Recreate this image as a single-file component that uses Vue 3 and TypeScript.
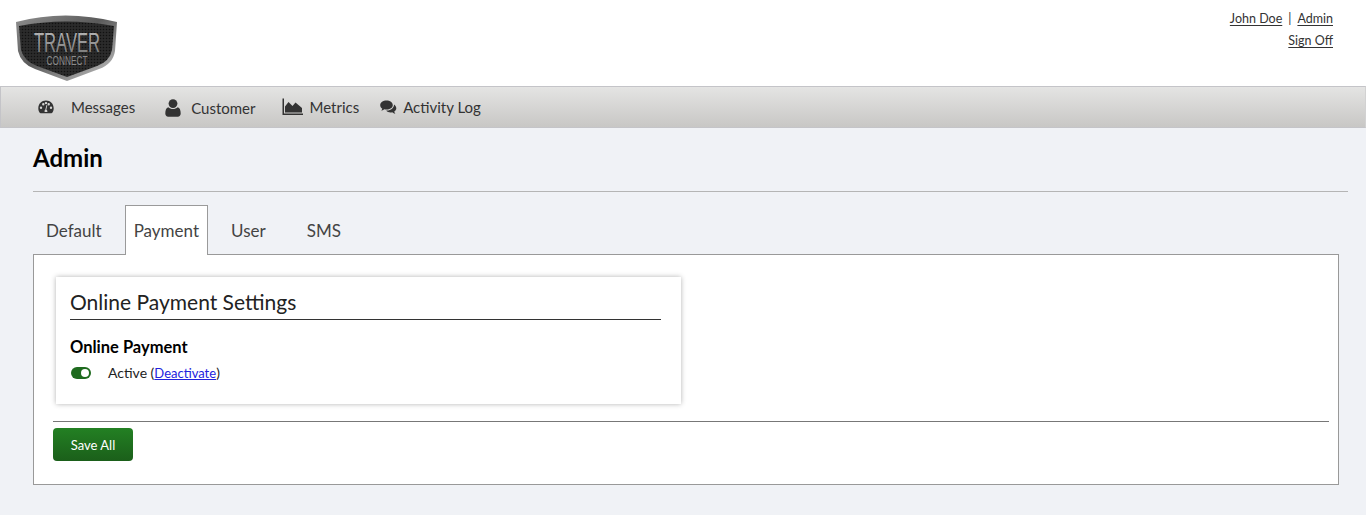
<template>
  <div class="page">
    <header class="top">
      <svg class="logo" viewBox="0 0 104 70" width="104" height="70">
        <defs>
          <linearGradient id="rim" x1="0" y1="0" x2="1" y2="1">
            <stop offset="0" stop-color="#8f8f8f" />
            <stop offset="0.45" stop-color="#5a5a5a" />
            <stop offset="1" stop-color="#c9c9c9" />
          </linearGradient>
          <linearGradient id="word" x1="0" y1="0" x2="0" y2="1">
            <stop offset="0" stop-color="#bdbdbd" />
            <stop offset="1" stop-color="#6f6f6f" />
          </linearGradient>
          <pattern id="mesh" width="3" height="3" patternUnits="userSpaceOnUse">
            <rect width="3" height="3" fill="#2b2b2b" />
            <circle cx="1.5" cy="1.5" r="0.8" fill="#111" />
          </pattern>
        </defs>
        <path d="M1 9 Q50 -4 102 9 L100 38 Q98 51 84 56 L52 68 L20 56 Q6 51 3 38 Z" fill="url(#rim)" />
        <path d="M4 13 Q50 4 99 13 L97 37 Q95 48 82 53 L52 64 L22 53 Q9 48 6 37 Z" fill="url(#mesh)" />
        <text class="logo-main" x="52" y="39" text-anchor="middle" fill="url(#word)" textLength="66" lengthAdjust="spacingAndGlyphs">TRAVER</text>
        <text class="logo-sub" x="52" y="52" text-anchor="middle" fill="#8a8a8a" textLength="41" lengthAdjust="spacingAndGlyphs">CONNECT</text>
      </svg>
      <div class="account">
        <div><a>John Doe</a><span class="sep">|</span><a>Admin</a></div>
        <div class="account-row"><a>Sign Off</a></div>
      </div>
    </header>

    <nav class="nav">
      <a class="nav-item messages">
        <svg width="16" height="14" viewBox="0 0 16 14">
          <path fill-rule="evenodd" d="M8 0.5C3.6 0.5 0.3 3.9 0.3 8.2c0 1.7.5 3.3 1.4 4.6.2.3.5.5.9.5h10.800c.4 0 .7-.2.9-.5.9-1.300 1.400-2.900 1.400-4.600C15.700 3.900 12.400.5 8 .5zM3 8.900a1.200 1.200 0 1 1 0-2.400 1.200 1.200 0 0 1 0 2.400zm2.300-3.500a1.200 1.200 0 1 1 0-2.400 1.200 1.200 0 0 1 0 2.400zM8 4.300a1.200 1.200 0 1 1 0-2.400 1.200 1.200 0 0 1 0 2.400zm1.300 7.600H6.700a1.500 1.500 0 0 1 .6-2.100L8.500 5l.8.200-1 4.500c.9.300 1.400 1.300 1 2.200zm1.400-6.500a1.200 1.200 0 1 1 0-2.400 1.200 1.200 0 0 1 0 2.400zM13 8.900a1.200 1.200 0 1 1 0-2.400 1.200 1.200 0 0 1 0 2.400z" fill="#333" />
        </svg>
        <span>Messages</span>
      </a>
      <a class="nav-item customer">
        <svg width="16" height="18" viewBox="0 0 16 18">
          <circle cx="8" cy="4.600" r="4.400" fill="#333" />
          <path d="M3.300 8.200C1.200 8.900.3 11 .3 14.600c0 2 1.200 3.100 2.900 3.100h9.600c1.700 0 2.900-1.100 2.900-3.100 0-3.600-.9-5.700-3-6.400-1.200 1.100-2.900 1.800-4.700 1.800s-3.500-.7-4.700-1.800z" fill="#333" />
        </svg>
        <span>Customer</span>
      </a>
      <a class="nav-item metrics">
        <svg width="21" height="18" viewBox="0 0 21 18">
          <path d="M0.500 0.500V17H21V15.500H2V0.500Z" fill="#333" />
          <path d="M3 14.500V8.500L6.500 4l4 4 3-3.500L20 10v4.500Z" fill="#333" />
        </svg>
        <span>Metrics</span>
      </a>
      <a class="nav-item activity">
        <svg width="17" height="15" viewBox="0 0 17 15">
          <path d="M6.500.5C3 .5.200 2.600.200 5.200c0 1.400.8 2.600 2.100 3.500-.2.700-.6 1.300-1.200 1.900 1.200-.1 2.300-.6 3.200-1.300.7.200 1.400.3 2.200.3 3.500 0 6.300-2.100 6.300-4.400C12.800 2.600 10 .5 6.500.5z" fill="#333" />
          <path d="M14 4.500c.2 3.300-3 5.900-7 6.100-.4 0-.6.100-.7.200 1 1 2.500 1.600 4.200 1.600.6 0 1.200-.1 1.700-.2.900.8 2 1.300 3.300 1.500-.7-.6-1-1.300-1.300-2.100 1.300-.8 2.100-2 2.100-3.300 0-1.600-.9-2.900-2.300-3.800z" fill="#333" />
        </svg>
        <span>Activity Log</span>
      </a>
    </nav>

    <main class="content">
      <h1 class="title">Admin</h1>
      <hr class="title-rule" />
      <div class="tabs">
        <a
          v-for="tab in tabs"
          :key="tab"
          class="tab"
          :class="{ active: tab === activeTab }"
        >{{ tab }}</a>
      </div>
      <section class="panel">
        <div class="card">
          <h2 class="card-title">Online Payment Settings</h2>
          <h3 class="card-label">Online Payment</h3>
          <div class="status">
            <span class="toggle"><span class="knob"></span></span>
            <span>Active (<a class="link">Deactivate</a>)</span>
          </div>
        </div>
        <hr class="panel-rule" />
        <button class="save" type="button">Save All</button>
      </section>
    </main>
  </div>
</template>

<script setup lang="ts">
const tabs: string[] = ['Default', 'Payment', 'User', 'SMS'];
const activeTab = 'Payment';
</script>

<style>
html,
body {
  margin: 0;
  background: #f0f2f6;
}
</style>

<style scoped>
.page {
  height: 515px;
  overflow: hidden;
  background: #f0f2f6;
  color: #000;
  font-family: 'Lato', 'Open Sans', sans-serif;
}

.top {
  height: 86px;
  background: #fff;
  display: flex;
  justify-content: space-between;
  box-sizing: border-box;
  padding: 13px 33px 0 15px;
}

.logo {
  display: block;
}

.account {
  font-size: 12.500px;
  color: #333;
  text-align: right;
  padding-top: 0;
  line-height: 12px;
}

.account a {
  text-decoration: underline;
  text-underline-offset: 2px;
}

.account > div {
  padding-top: 0;
}

.account-row {
  margin-top: 10px;
}

.sep {
  margin: 0 6px;
}

.nav {
  height: 42px;
  box-sizing: border-box;
  border: 1px solid #c4c4c8;
  border-right-color: #d2d2d2;
  background: linear-gradient(#e4e4e3, #c8c7c5);
  display: flex;
  align-items: center;
  font-size: 15px;
  color: #333;
}

.nav-item {
  display: flex;
  align-items: center;
}

.nav-item svg {
  display: block;
}

.messages {
  margin-left: 37px;
}

.messages span {
  margin-left: 17px;
}

.customer {
  margin-left: 30px;
  margin-top: 2px;
}

.customer span {
  margin-left: 10px;
}

.metrics {
  margin-left: 27px;
}

.metrics span {
  margin-left: 6px;
}

.activity {
  margin-left: 21px;
}

.activity span {
  margin-left: 6px;
}

.content {
  padding: 0 18px 0 33px;
}

.title {
  margin: 0;
  padding-top: 15px;
  font-size: 24px;
  line-height: 30px;
  font-weight: 700;
}

.title-rule {
  margin: 18px 0 0;
  border: 0;
  border-top: 1px solid #b5b5b5;
}

.tabs {
  margin-top: 13px;
  display: flex;
  height: 50px;
  font-size: 17px;
  color: #444;
  margin-bottom: -1px;
  position: relative;
  z-index: 1;
}

.tab {
  box-sizing: border-box;
  height: 50px;
  line-height: 49px;
  padding: 0 8px;
  border: 1px solid transparent;
  border-bottom: 0;
}

.tab:nth-child(1) {
  padding: 0 22px 0 12px;
}

.tab:nth-child(3) {
  padding: 0 22px;
}

.tab:nth-child(4) {
  padding: 0 17px;
}

.tab.active {
  background: #fff;
  border-color: #9a9a9a;
}

.panel {
  box-sizing: border-box;
  width: 1306px;
  height: 231px;
  border: 1px solid #999;
  background: #fff;
  padding: 22px 9px 0 19px;
}

.card {
  box-sizing: border-box;
  width: 625px;
  height: 127px;
  margin-left: 3px;
  padding: 12px 20px 0 14px;
  background: #fff;
  box-shadow: 0 0 5px rgba(0, 0, 0, 0.3);
}

.card-title {
  margin: 0 0 0 0;
  font-size: 21px;
  font-weight: 400;
  line-height: 26px;
  color: #222;
  padding-bottom: 4px;
  border-bottom: 1px solid #333;
  position: relative;
}

.card-label {
  margin: 17px 0 0;
  font-size: 16.500px;
  line-height: 20px;
  font-weight: 700;
}

.status {
  display: flex;
  align-items: center;
  gap: 17px;
  font-size: 14px;
  line-height: 18px;
  margin-top: 7px;
  color: #222;
}

.toggle {
  width: 20px;
  height: 12px;
  margin-left: 1px;
  border-radius: 6px;
  background: #1f6b1f;
  position: relative;
  display: block;
}

.knob {
  position: absolute;
  right: 2px;
  top: 2px;
  width: 8px;
  height: 8px;
  border-radius: 50%;
  background: #fff;
}

.link {
  color: #2222dd;
  text-decoration: underline;
  font-size: 13px;
}

.panel-rule {
  margin: 17px 0 0;
  border: 0;
  border-top: 1px solid #777;
}

.save {
  display: block;
  margin-top: 6px;
  width: 80px;
  height: 33px;
  border: 0;
  border-radius: 4px;
  background: linear-gradient(#238023, #1b5f1a);
  color: #fff;
  font-family: inherit;
  font-size: 13px;
  padding: 0;
}

.logo-main {
  font-family: 'Liberation Sans', sans-serif;
  font-size: 27px;
}

.logo-sub {
  font-family: 'Liberation Sans', sans-serif;
  font-size: 13px;
}
</style>
